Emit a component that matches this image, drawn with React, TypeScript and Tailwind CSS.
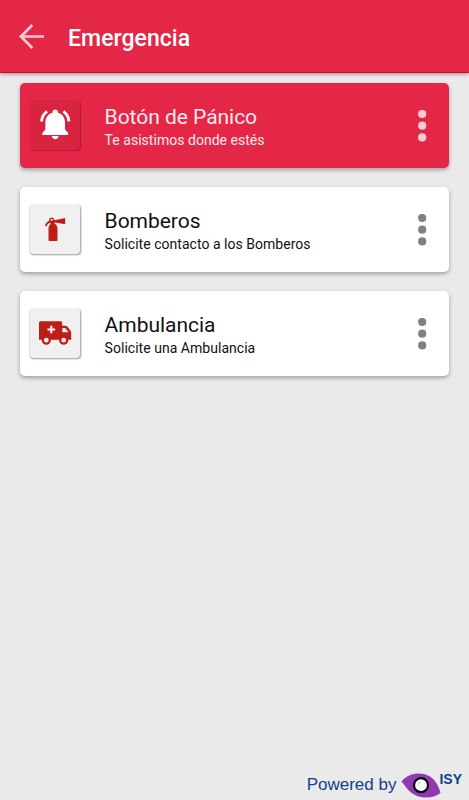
import React from 'react';
import clsx from 'clsx';

interface EmergencyCardProps {
  title: string;
  description: string;
  icon: React.ReactNode;
  primary?: boolean;
}

const BellIcon = () => (
  <svg className="h-[50px] w-[51px]" viewBox="0 0 51 50" fill="none">
    <path d="M25.2 9.5c1.6 0 2.7 1.1 2.7 2.6v.7c4.4 1.2 7.1 5 7.1 9.8v7l3.1 3.3V35H12.3v-2.1l3.1-3.3v-7c0-4.8 2.7-8.6 7.1-9.8v-.7c0-1.5 1.1-2.6 2.7-2.6z" fill="#fff" />
    <path d="M21.8 36h6.7c0 1.9-1.4 3.2-3.3 3.2S21.8 37.9 21.8 36z" fill="#fff" />
    <path d="M17.1 11.4c-3.2 2.2-5.2 5.6-5.5 10M33.4 11.4c3.2 2.2 5.2 5.6 5.5 10" stroke="#fff" strokeWidth="2.8" />
  </svg>
);

const ExtinguisherIcon = () => (
  <svg className="h-[50px] w-[51px]" viewBox="0 0 51 50" fill="none">
    <path d="M18.5 36V24.5c0-2.5 1.3-4.4 3.2-5.1h2.6c1.9.7 3.2 2.6 3.2 5.1V36c0 .6-.4 1-1 1h-7c-.6 0-1-.4-1-1z" fill="#bd1e18" />
    <path d="M15.8 22c.6-2.4 2.4-4.1 5.2-4.5h4" stroke="#bd1e18" strokeWidth="1.8" />
    <path d="M23.5 16.5l11.7-2.4v6.1l-11.7-1.9z" fill="#bd1e18" />
    <circle cx="21.7" cy="16" r="1.9" stroke="#bd1e18" strokeWidth="1.3" />
    <path d="M20.5 17.7h4v2.8h-4z" fill="#bd1e18" />
  </svg>
);

const AmbulanceIcon = () => (
  <svg className="h-[50px] w-[51px]" viewBox="0 0 51 50" fill="none">
    <path d="M10.5 13.3h20.2c.8 0 1.5.7 1.5 1.5v3h3.4c.8 0 1.4.3 1.9.9l3.2 4.2c.3.4.5.9.5 1.5v7.3H9V14.8c0-.8.7-1.5 1.5-1.5z" fill="#bd1e18" />
    <path d="M32.4 19.9h2.8l3.3 4.3h-6.1z" fill="#f0f0f0" />
    <path d="M21.3 17.7v7.6M17.5 21.5h7.6" stroke="#fff" strokeWidth="2" />
    <circle cx="16.3" cy="32.2" r="3.5" fill="#f0f0f0" stroke="#bd1e18" strokeWidth="2.2" />
    <circle cx="33.7" cy="32.2" r="3.5" fill="#f0f0f0" stroke="#bd1e18" strokeWidth="2.2" />
  </svg>
);

const DotsIcon = () => (
  <svg className="h-8 w-[9px]" viewBox="0 0 9 32" fill="currentColor">
    <circle cx="4.2" cy="4" r="4.1" />
    <circle cx="4.2" cy="15.7" r="4.1" />
    <circle cx="4.2" cy="27.4" r="4.1" />
  </svg>
);

const EmergencyCard: React.FC<EmergencyCardProps> = ({ title, description, icon, primary }) => (
  <div
    className={clsx(
      'flex h-[85px] items-center rounded-[5px] pl-[10px] shadow-[0_2px_4px_rgba(0,0,0,0.32)]',
      primary ? 'bg-[#e42647] text-[#ffe9ed]' : 'bg-white text-[#111]'
    )}
  >
    <div
      className={clsx(
        'mb-[1px] h-[50px] w-[50px] shrink-0 rounded-[4px]',
        primary ? 'bg-[#d82440] shadow-[1px_1px_1px_rgba(90,0,15,0.35)]' : 'bg-[#f0f0f0] shadow-[0.5px_1px_2px_rgba(0,0,0,0.4)]'
      )}
    >
      {icon}
    </div>
    <div className="ml-[24.6px] flex-1 pt-[2px]">
      <h2 className="text-[21px] leading-[26px] tracking-[-0.03px]">{title}</h2>
      <p className="text-[14px] leading-5 tracking-[0.03px]">{description}</p>
    </div>
    {/* Options */}
    <button className={clsx('mr-[22px]', primary ? 'text-[#facbd4]' : 'text-[#808080]')} aria-label="Opciones">
      <DotsIcon />
    </button>
  </div>
);

export default function App() {
  return (
    <div className="flex h-[800px] w-full flex-col overflow-hidden bg-[#eaeaea] font-['Roboto',sans-serif]">
      <header className="flex h-[73px] shrink-0 items-center border-b border-[#e3002b] bg-[#e42647] pl-[19px] text-white shadow-[0_1px_4px_rgba(0,0,0,0.4)]">
        <svg className="h-[25px] w-[25px]" viewBox="0 0 25 25" fill="none" stroke="#ffc9d3" strokeWidth="2.7">
          <path d="M13.3 1L1.9 12.5L13.3 24M2 12.5H25" />
        </svg>
        <h1 className="ml-6 pt-[5px] text-[23px] font-medium leading-7 tracking-[0.05px]">Emergencia</h1>
      </header>
      <main className="flex flex-1 flex-col gap-[19px] px-5 pt-[10px]">
        <EmergencyCard title="Botón de Pánico" description="Te asistimos donde estés" icon={<BellIcon />} primary />
        <EmergencyCard title="Bomberos" description="Solicite contacto a los Bomberos" icon={<ExtinguisherIcon />} />
        <EmergencyCard title="Ambulancia" description="Solicite una Ambulancia" icon={<AmbulanceIcon />} />
      </main>
      <footer className="flex h-[30px] shrink-0 items-start justify-end pr-[7px] font-['Liberation_Sans',sans-serif] text-[#154288]">
        <span className="mr-[5px] pt-[5px] text-[17px] leading-5">Powered by</span>
        <svg className="mt-[2px] h-[27px] w-[40px]" viewBox="0 0 40 27">
          <path d="M.5 9.5C6 2.5 15 .3 23 2C31 4 37 10.5 39.5 21C33 26 23 27 15 23.500C7 20 5 14.500 .5 9.5z" fill="#9238b3" />
          <circle cx="20" cy="13.2" r="7" fill="#fff" stroke="#080808" strokeWidth="2.2" />
          <path d="M17 12.5l2-2.5" stroke="#999" strokeWidth=".8" />
        </svg>
        <span className="-ml-[2px] text-[14px] font-bold leading-[18px]">ISY</span>
      </footer>
    </div>
  );
}
